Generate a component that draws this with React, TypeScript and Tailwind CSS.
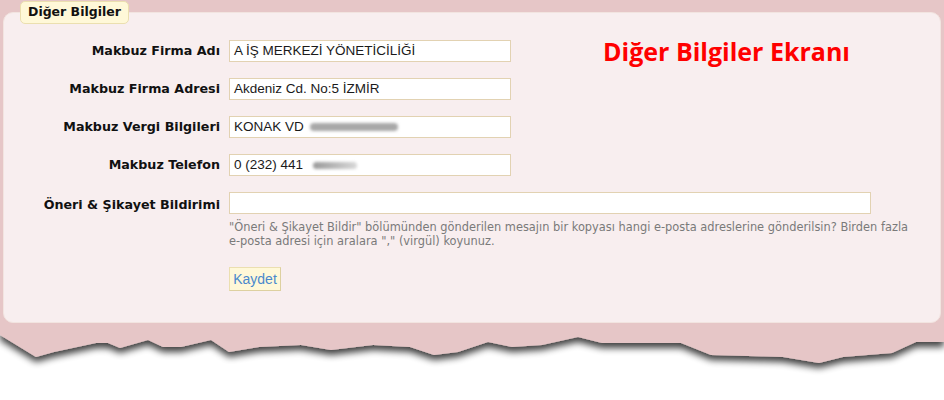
export default function App() {
  const label = "w-[216px] shrink-0 text-right font-bold text-[12.7px] text-[#111]";
  const lblFont = { fontFamily: '"DejaVu Sans", Verdana, sans-serif' };
  const inputCls =
    "h-[22px] border border-[#e2d2b2] bg-white px-[4px] flex items-center text-[13.5px] text-[#1a1a1a] whitespace-nowrap";
  const inFont = { fontFamily: '"Liberation Sans", Arial, sans-serif' };
  return (
    <div className="w-[944px] h-[400px] bg-white overflow-hidden">
      <div className="bg-[#e6c6c7] px-[3px] pt-[12px]">
        <div className="relative bg-[#f8eeef] rounded-[10px] border border-[#f2e4e0] pt-[27px] pb-[31px]">
          <div
            className="absolute left-[16px] top-[-12px] h-[23px] px-[7px] flex items-center bg-[#fff8d8] border border-[#ebdfb0] rounded-[5px] font-bold text-[12.5px] text-[#111]"
            style={lblFont}
          >
            Diğer Bilgiler
          </div>
          <div className="flex flex-col gap-[16px]">
            <div className="flex items-center h-[22px]">
              <div className={label} style={lblFont}>Makbuz Firma Adı</div>
              <div className={inputCls + " ml-[9px] w-[282px]"} style={inFont}>A İŞ MERKEZİ YÖNETİCİLİĞİ</div>
              <div
                className="ml-[92px] text-[25px] font-bold text-[#ff0000] leading-[22px] h-[22px] whitespace-nowrap"
                style={{ fontFamily: '"Open Sans", sans-serif' }}
              >
                Diğer Bilgiler Ekranı
              </div>
            </div>
            <div className="flex items-center">
              <div className={label} style={lblFont}>Makbuz Firma Adresi</div>
              <div className={inputCls + " ml-[9px] w-[282px]"} style={inFont}>Akdeniz Cd. No:5 İZMİR</div>
            </div>
            <div className="flex items-center">
              <div className={label} style={lblFont}>Makbuz Vergi Bilgileri</div>
              <div className={inputCls + " ml-[9px] w-[282px]"} style={inFont}>
                KONAK VD
                <span className="ml-[6px] inline-block w-[88px] h-[8px] rounded-full bg-[#a8a8a8] blur-[1.5px]" />
              </div>
            </div>
            <div className="flex items-center">
              <div className={label} style={lblFont}>Makbuz Telefon</div>
              <div className={inputCls + " ml-[9px] w-[282px]"} style={inFont}>
                0 (232) 441
                <span className="ml-[10px] inline-block w-[44px] h-[7px] rounded-full bg-gradient-to-r from-[#9a9a9a] to-[#d8d8d8] blur-[1.5px]" />
              </div>
            </div>
            <div className="flex items-start">
              <div className={label + " mt-[3px]"} style={lblFont}>Öneri &amp; Şikayet Bildirimi</div>
              <div className="ml-[9px] flex flex-col">
                <div className={inputCls + " w-[642px]"} style={inFont}></div>
                <div
                  className="mt-[6px] text-[11.4px] leading-[14px] text-[#7a7a7a] whitespace-nowrap"
                  style={lblFont}
                >
                  "Öneri &amp; Şikayet Bildir" bölümünden gönderilen mesajın bir kopyası hangi e-posta adreslerine gönderilsin? Birden fazla
                  <br />
                  e-posta adresi için aralara "," (virgül) koyunuz.
                </div>
                <div className="mt-[19px]">
                  <button
                    className="h-[24px] w-[52px] flex items-center justify-center bg-[#fff8d8] border border-[#ebdfb0] border-r-[#ddd0a0] border-b-[#ddd0a0] text-[14px] text-[#4a88cc]"
                    style={inFont}
                  >
                    Kaydet
                  </button>
                </div>
              </div>
            </div>
          </div>
        </div>
      </div>
      <svg width="944" height="77" viewBox="0 0 944 77" className="block">
        <defs>
          <filter id="sh" x="-5%" y="-20%" width="110%" height="180%">
            <feGaussianBlur in="SourceAlpha" stdDeviation="3.5" />
            <feOffset dx="0" dy="5" result="b" />
            <feComponentTransfer>
              <feFuncA type="linear" slope="0.75" />
            </feComponentTransfer>
            <feMerge>
              <feMergeNode />
              <feMergeNode in="SourceGraphic" />
            </feMerge>
          </filter>
        </defs>
        <path
          filter="url(#sh)"
          fill="#e6c6c7"
          d="M0,0 H944 V19 L916,19 L892,30 L843,34 L819,40 L783,34 L711,32 L681,20 L602,20 L578,14 L542,22 L512,24 L488,19 L458,29 L434,32 L410,24 L373,22 L331,27 L301,22 L259,24 L229,29 L211,17 L181,24 L163,24 L148,17 L120,25 L108,20 L96,20 L54,29 L36,34 L0,12 Z"
        />
      </svg>
    </div>
  );
}
